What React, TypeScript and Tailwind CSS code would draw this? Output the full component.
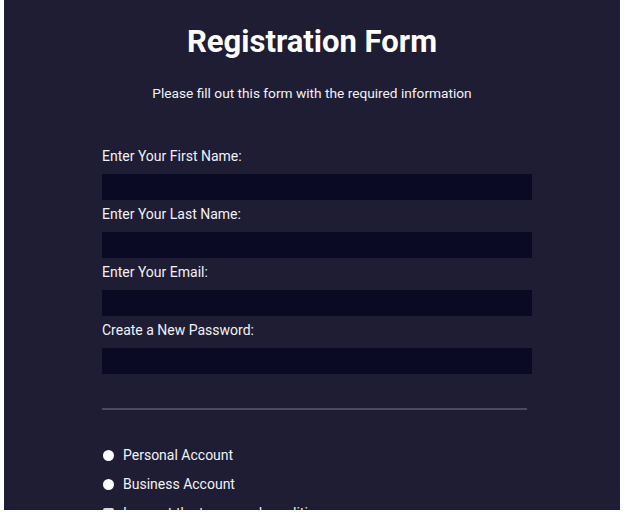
const fields = [
  "Enter Your First Name:",
  "Enter Your Last Name:",
  "Enter Your Email:",
  "Create a New Password:",
]

export default function App() {
  return (
    <div className="w-[625px] h-[526px] bg-white overflow-hidden">
      <div
        className="ml-[4px] w-[616px] h-[510px] bg-[#1e1d34] overflow-hidden text-[#f2f2f6]"
        style={{ fontFamily: "Roboto, 'Liberation Sans', sans-serif" }}
      >
        <h1 className="pt-[25px] text-center text-[31px] leading-[34px] font-bold text-white">Registration Form</h1>
        <p className="mt-[25px] text-center text-[13.7px] leading-[18px]">
          Please fill out this form with the required information
        </p>

        <form className="mt-[46px] pl-[98px] pr-[88px] flex flex-col">
          {fields.map((label) => (
            <div key={label} className="flex flex-col">
              <label className="text-[14px] leading-[17px]">{label}</label>
              <div className="mt-[9px] mb-[6px] h-[26px] bg-[#0b0a25]" />
            </div>
          ))}

          <div className="mt-[28px] mr-[5px] h-[2px] bg-[#4b4a62]" />

          <div className="mt-[37px] flex flex-col gap-[12px]">
            {["Personal Account", "Business Account"].map((t) => (
              <div key={t} className="flex items-center gap-[9px] text-[14px] leading-[17px]">
                <span className="ml-[1px] w-[11px] h-[11px] rounded-full bg-white" />
                <span>{t}</span>
              </div>
            ))}
            <div className="flex items-center gap-[9px] text-[14px] leading-[17px]">
              <span className="ml-[1px] w-[11px] h-[11px] rounded-[2px] bg-[#d9d9df]" />
              <span>I accept the terms and conditions</span>
            </div>
          </div>
        </form>
      </div>
    </div>
  )
}
